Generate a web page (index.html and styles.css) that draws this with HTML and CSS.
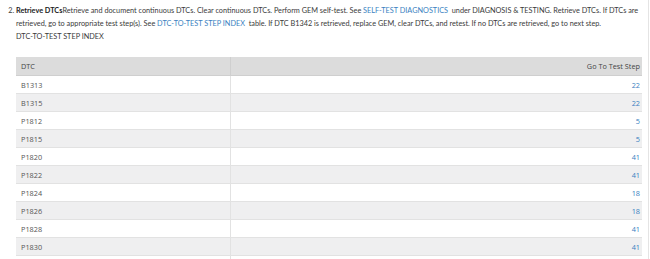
FILE: index.html
```html
<!DOCTYPE html>
<html>
<head>
<meta charset="utf-8">
<link rel="stylesheet" href="styles.css">
</head>
<body>
<div class="page">
  <ol class="steps" start="2">
    <li><b>Retrieve DTCs</b>Retrieve and document continuous DTCs. Clear continuous DTCs. Perform GEM self-test. See <a href="#">SELF-TEST DIAGNOSTICS</a>&nbsp; under DIAGNOSIS &amp; TESTING. Retrieve DTCs. If DTCs are retrieved, go to appropriate test step(s). See <a href="#">DTC-TO-TEST STEP INDEX</a>&nbsp; table. If DTC B1342 is retrieved, replace GEM, clear DTCs, and retest. If no DTCs are retrieved, go to next step.<br>DTC-TO-TEST STEP INDEX</li>
  </ol>
  <table class="dtc">
    <thead>
      <tr><th class="c1">DTC</th><th class="c2">Go To Test Step</th></tr>
    </thead>
    <tbody>
      <tr><td>B1313</td><td class="num"><a href="#">22</a></td></tr>
      <tr><td>B1315</td><td class="num"><a href="#">22</a></td></tr>
      <tr><td>P1812</td><td class="num"><a href="#">5</a></td></tr>
      <tr><td>P1815</td><td class="num"><a href="#">5</a></td></tr>
      <tr><td>P1820</td><td class="num"><a href="#">41</a></td></tr>
      <tr><td>P1822</td><td class="num"><a href="#">41</a></td></tr>
      <tr><td>P1824</td><td class="num"><a href="#">18</a></td></tr>
      <tr><td>P1826</td><td class="num"><a href="#">18</a></td></tr>
      <tr><td>P1828</td><td class="num"><a href="#">41</a></td></tr>
      <tr><td>P1830</td><td class="num"><a href="#">41</a></td></tr>
      <tr><td></td><td class="num"></td></tr>
    </tbody>
  </table>
</div>
</body>
</html>
```
FILE: styles.css
```css
html, body {
  margin: 0;
  padding: 0;
  background: #fff;
  overflow: hidden;
}
.page {
  padding: 4px 7px 0 0;
  border-right: 1px solid #e4e4e4;
  width: 649px;
  height: 259px;
  box-sizing: border-box;
  font-family: Lato, "Open Sans", sans-serif;
  color: #3a3a3a;
  overflow: hidden;
}
.steps {
  margin: 0;
  padding-left: 16px;
  font-size: 7.3px;
  line-height: 13px;
}
.steps b {
  font-weight: 700;
  color: #222;
}
.steps a, .dtc a {
  color: #3a7fc1;
  text-decoration: none;
}
.dtc {
  margin: 14px 0 0 16px;
  width: 626px;
  border-collapse: collapse;
  font-family: "Open Sans", sans-serif;
  font-size: 7.3px;
  color: #555;
}
.dtc th {
  background: #dcdcdc;
  font-weight: 400;
  color: #444;
  height: 18px;
  padding: 0 2px 0 5px;
  text-align: left;
  border-bottom: 1px solid #cfcfcf;
}
.dtc th.c1 {
  width: 207px;
  border-right: 1px solid #cfcfcf;
}
.dtc th.c2 {
  text-align: right;
}
.dtc td {
  height: 17px;
  padding: 0 2px 0 5px;
  border-bottom: 1px solid #e2e2e2;
}
.dtc td:first-child {
  border-right: 1px solid #e2e2e2;
}
.dtc td.num {
  text-align: right;
}
.dtc tbody tr:nth-child(even) {
  background: #efeff0;
}
```
